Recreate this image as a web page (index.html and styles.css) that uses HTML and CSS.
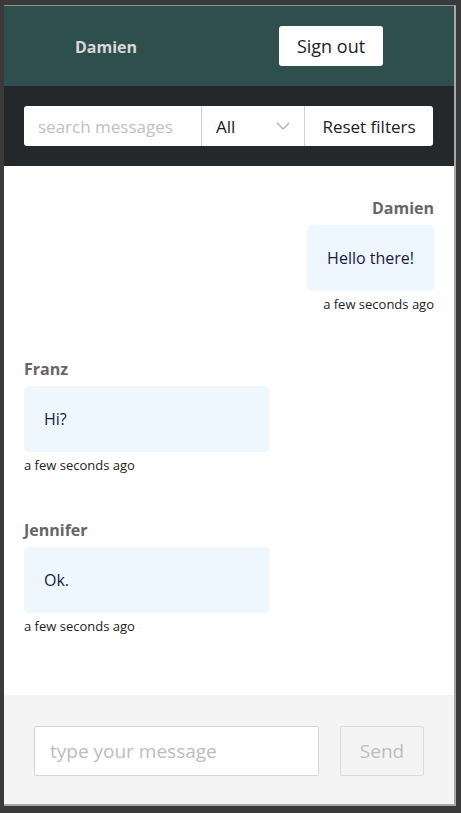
FILE: index.html
```html
<!DOCTYPE html>
<html>
<head>
<meta charset="utf-8">
<link rel="stylesheet" href="styles.css">
</head>
<body>
<div class="app">
  <header class="top">
    <span class="user">Damien</span>
    <button class="signout">Sign out</button>
  </header>
  <div class="filters">
    <div class="search">search messages</div>
    <div class="select"><span>All</span>
      <svg width="14" height="8" viewBox="0 0 14 8"><path d="M1 1 L7 7 L13 1" fill="none" stroke="#aaa" stroke-width="1.2"/></svg>
    </div>
    <button class="reset">Reset filters</button>
  </div>
  <main class="messages">
    <div class="msg own">
      <div class="name">Damien</div>
      <div class="bubble">Hello there!</div>
      <div class="time">a few seconds ago</div>
    </div>
    <div class="msg">
      <div class="name">Franz</div>
      <div class="bubble">Hi?</div>
      <div class="time">a few seconds ago</div>
    </div>
    <div class="msg">
      <div class="name">Jennifer</div>
      <div class="bubble">Ok.</div>
      <div class="time">a few seconds ago</div>
    </div>
  </main>
  <footer class="composer">
    <div class="input">type your message</div>
    <button class="send">Send</button>
  </footer>
</div>
</body>
</html>
```
FILE: styles.css
```css
* { box-sizing: border-box; }
html, body { margin: 0; padding: 0; }
body {
  background: #3a3a3a;
  width: 461px;
  height: 813px;
  overflow: hidden;
  font-family: "Open Sans", "Noto Sans", sans-serif;
}
.app {
  margin: 5px 0 0 4px;
  width: 452px;
  border-top: 1px solid #8f8f8f;
  border-right: 2px solid #a8a8a8;
  border-bottom: 2px solid #a8a8a8;
  display: flex;
  flex-direction: column;
  height: 801px;
}
.top {
  height: 80px;
  background: #2f4f4f;
  display: flex;
  align-items: center;
  justify-content: space-around;
}
.user {
  color: #d8d8d8;
  font-weight: 700;
  font-size: 16px;
  padding-top: 2px;
}
.signout {
  width: 104px;
  height: 40px;
  background: #fff;
  border: none;
  border-radius: 3px;
  font-family: inherit;
  font-size: 18px;
  color: #222;
  padding: 0;
}
.filters {
  height: 80px;
  background: #24282b;
  display: flex;
  align-items: center;
  padding: 0 20px;
}
.search, .select, .reset {
  height: 40px;
  background: #fff;
  display: flex;
  align-items: center;
  font-size: 17px;
}
.search {
  width: 178px;
  border-radius: 3px 0 0 3px;
  color: #c0c0c0;
  padding-left: 14px;
  border-right: 1px solid #cfcfcf;
}
.select {
  width: 103px;
  padding: 0 14px;
  justify-content: space-between;
  color: #1a1a1a;
  border-right: 1px solid #cfcfcf;
}
.reset {
  width: 128px;
  border: none;
  border-radius: 0 3px 3px 0;
  font-family: inherit;
  color: #222;
  justify-content: center;
  padding: 0;
}
.messages {
  height: 529px;
  background: #fff;
  padding: 20px;
  display: flex;
  flex-direction: column;
}
.msg {
  display: flex;
  flex-direction: column;
  align-items: flex-start;
  margin-top: 11px;
  margin-bottom: 34px;
}
.msg.own { align-items: flex-end; }
.name {
  font-weight: 700;
  color: #666;
  font-size: 16px;
  line-height: 22px;
  margin-bottom: 6px;
}
.bubble {
  background: #eef6fe;
  border-radius: 5px;
  padding: 20px;
  font-size: 16px;
  line-height: 26px;
  color: #1a1a3c;
  width: 246px;
}
.msg.own .bubble { width: auto; }
.time {
  font-size: 13px;
  line-height: 18px;
  color: #222;
  margin-top: 4px;
}
.composer {
  flex: 1;
  background: #f4f4f4;
  display: flex;
  align-items: center;
  padding: 3px 30px 0 30px;
  gap: 21px;
}
.input {
  flex: 1;
  height: 50px;
  background: #fff;
  border: 1px solid #d6d6d6;
  border-radius: 2px;
  display: flex;
  align-items: center;
  padding-left: 15px;
  font-size: 19px;
  color: #bdbdbd;
}
.send {
  width: 84px;
  height: 50px;
  background: #f4f4f4;
  border: 1px solid #dcdcdc;
  border-radius: 2px;
  font-family: inherit;
  font-size: 19px;
  color: #bdbdbd;
  padding: 0;
}
```
